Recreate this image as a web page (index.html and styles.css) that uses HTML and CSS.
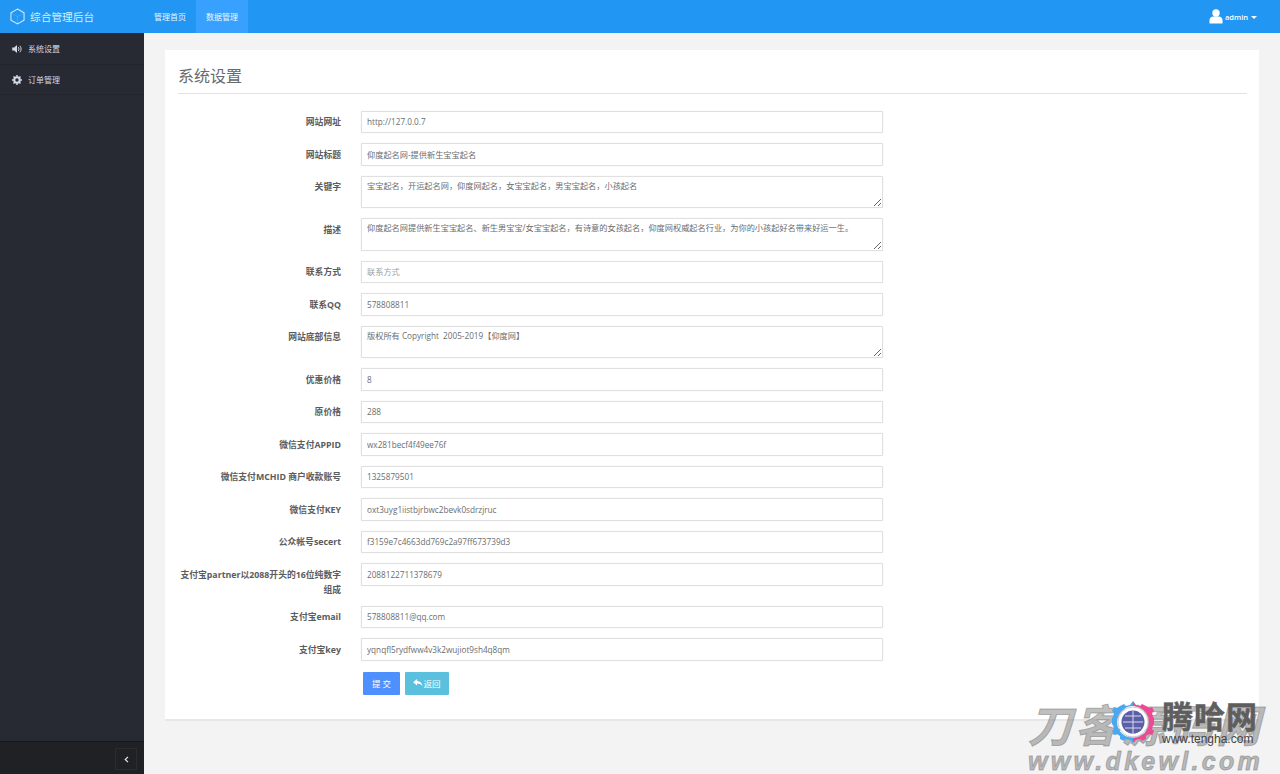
FILE: index.html
```html
<!DOCTYPE html>
<html lang="zh-CN">
  <head>
    <meta charset="UTF-8" />
    <title>系统设置</title>
    <link rel="stylesheet" href="styles.css">
  </head>
  <body>
    <header class="navbar">
      <a class="brand">
        <svg class="brand-icon" viewBox="0 0 16 18" width="15" height="17">
          <path d="M8 1 15 5v8l-7 4-7-4V5z" fill="none" stroke="#d8ecfc" stroke-width="1.100"/>
          <path d="M1 5l7 4 7-4M8 9v8" fill="none" stroke="#d8ecfc" stroke-width="0.600" opacity="0.350"/>
        </svg>
        <span>综合管理后台</span>
      </a>
      <nav class="nav">
        <a>管理首页</a>
        <a class="active">数据管理</a>
      </nav>
      <div class="user">
        <svg viewBox="0 0 14 15" width="14" height="15">
          <circle cx="7" cy="4" r="3.700" fill="#fff"/>
          <path d="M0.500 14.500V11c0-2.400 2-3.600 3.400-3.600h6.200c1.400 0 3.400 1.200 3.400 3.600v3.500z" fill="#fff"/>
        </svg>
        <span>admin</span>
        <i class="caret"></i>
      </div>
    </header>

    <div class="main">
      <aside class="sidebar">
        <ul class="menu">
          <li>
            <svg viewBox="0 0 12 10" width="10" height="8">
              <path d="M0 3h2.500L6 0v10L2.500 7H0z" fill="#d5d9e6"/>
              <path d="M7.500 2.500c1.300 1.300 1.300 3.700 0 5M9.500 1c2.200 2.200 2.200 5.800 0 8" fill="none" stroke="#d5d9e6" stroke-width="1.200"/>
            </svg>
            系统设置
          </li>
          <li>
            <svg viewBox="0 0 12 12" width="10" height="10">
              <circle cx="6" cy="6" r="3.300" fill="none" stroke="#d5d9e6" stroke-width="2.400"/>
              <path d="M6 0v12M0 6h12M1.800 1.800l8.400 8.400M10.200 1.800l-8.400 8.400" stroke="#d5d9e6" stroke-width="1.700" stroke-dasharray="2.200 7.600"/>
            </svg>
            订单管理
          </li>
        </ul>
        <div class="sidebar-foot">
          <button class="collapse" type="button">
            <svg viewBox="0 0 6 8" width="5" height="7">
              <path d="M4.800 0.800 1.500 4l3.300 3.200" fill="none" stroke="#dbe6ee" stroke-width="1.500"/>
            </svg>
          </button>
        </div>
      </aside>

      <main class="content">
        <section class="card">
          <h2 class="card-title">系统设置</h2>
          <form class="form">
            <div class="row"><label>网站网址</label><input type="text" value="http://127.0.0.7" /></div>
            <div class="row"><label>网站标题</label><input type="text" value="仰度起名网-提供新生宝宝起名" /></div>
            <div class="row"><label>关键字</label><textarea>宝宝起名，开运起名网，仰度网起名，女宝宝起名，男宝宝起名，小孩起名</textarea></div>
            <div class="row"><label>描述</label><textarea>仰度起名网提供新生宝宝起名、新生男宝宝/女宝宝起名，有诗意的女孩起名，仰度网权威起名行业，为你的小孩起好名带来好运一生。</textarea></div>
            <div class="row"><label>联系方式</label><input type="text" placeholder="联系方式" /></div>
            <div class="row"><label>联系QQ</label><input type="text" value="578808811" /></div>
            <div class="row"><label>网站底部信息</label><textarea>版权所有 Copyright  2005-2019【仰度网】</textarea></div>
            <div class="row"><label>优惠价格</label><input type="text" value="8" /></div>
            <div class="row"><label>原价格</label><input type="text" value="288" /></div>
            <div class="row"><label>微信支付APPID</label><input type="text" value="wx281becf4f49ee76f" /></div>
            <div class="row"><label>微信支付MCHID 商户收款账号</label><input type="text" value="1325879501" /></div>
            <div class="row"><label>微信支付KEY</label><input type="text" value="oxt3uyg1iistbjrbwc2bevk0sdrzjruc" /></div>
            <div class="row"><label>公众帐号secert</label><input type="text" value="f3159e7c4663dd769c2a97ff673739d3" /></div>
            <div class="row row-tall"><label>支付宝partner以2088开头的16位纯数字组成</label><input type="text" value="2088122711378679" /></div>
            <div class="row"><label>支付宝email</label><input type="text" value="578808811@qq.com" /></div>
            <div class="row"><label>支付宝key</label><input type="text" value="yqnqfl5rydfww4v3k2wujiot9sh4q8qm" /></div>
            <div class="row">
              <span></span>
              <div class="actions">
                <button class="btn btn-primary" type="button">提 交</button>
                <button class="btn btn-info" type="button">
                  <svg viewBox="0 0 11 9" width="10" height="8">
                    <path d="M4.500 0 0 3.700 4.500 7.400V5.200c2.800 0 4.600.7 5.900 3.300C10.400 4.800 8 2.300 4.500 2.200z" fill="#fff"/>
                  </svg>返回
                </button>
              </div>
            </div>
          </form>
        </section>
      </main>
    </div>

    <div class="watermark">
      <div class="wm-back">
        <div class="wm-big">刀客源码网</div>
        <div class="wm-url">www.dkewl.com</div>
      </div>
      <svg class="wm-gear" viewBox="0 0 42 42" width="42" height="42">
        <path d="M21 0v5a16 16 0 0 0 0 32v5l-3-3-4-1-2 2-4-2v-3l-3-2-3 1-2-4 2-2-1-4-3-2v-4l3-2 1-4-2-2 2-4 3 1 3-2V5l4-2 2 2 4-1z" fill="#4aa8ee"/>
        <path d="M21 0v5a16 16 0 0 1 0 32v5l3-3 4-1 2 2 4-2v-3l3-2 3 1 2-4-2-2 1-4 3-2v-4l-3-2-1-4 2-2-2-4-3 1-3-2V5l-4-2-2 2-4-1z" fill="#ec4a92"/>
        <circle cx="21" cy="21" r="15" fill="#fff" stroke="#ccd" stroke-width="1"/>
        <circle cx="21" cy="21" r="11.500" fill="#5a5fa8"/>
        <path d="M21 10v22M11 21h20M13 15h16M13 27h16" stroke="#d9dbee" stroke-width="1"/>
      </svg>
      <div class="wm-front">
        <div class="wm-name">腾哈网</div>
        <div class="wm-site">www.tengha.com</div>
      </div>
    </div>
  </body>
</html>
```

FILE: styles.css
```css
* {
  box-sizing: border-box;
}
html,
body {
  height: 100%;
}
body {
  margin: 0;
  display: flex;
  flex-direction: column;
  overflow: hidden;
  font-family: "Open Sans", "Noto Sans CJK SC", sans-serif;
  color: #676a6c;
  background-color: #f3f3f4;
}
.navbar {
  flex: none;
  height: 33px;
  display: flex;
  align-items: stretch;
  background-color: #2196f3;
  color: #fff;
}
.brand {
  width: 144px;
  display: flex;
  align-items: center;
  gap: 5px;
  padding-left: 10px;
  font-size: 10.700px;
  color: #dcedfb;
}
.nav {
  display: flex;
}
.nav a {
  width: 52px;
  display: flex;
  align-items: center;
  justify-content: center;
  font-size: 8px;
  color: #e8f4fe;
}
.nav a.active {
  background-color: #38a1ff;
}
.user {
  margin-left: auto;
  display: flex;
  align-items: center;
  gap: 2px;
  padding-right: 23px;
  font-size: 7.500px;
  font-weight: 600;
}
.caret {
  width: 0;
  height: 0;
  margin-left: 1px;
  margin-top: 2px;
  border-left: 3px solid transparent;
  border-right: 3px solid transparent;
  border-top: 3px solid #fff;
}
.main {
  flex: 1;
  min-height: 0;
  display: flex;
}
.sidebar {
  flex: none;
  width: 144px;
  display: flex;
  flex-direction: column;
  background-color: #272a33;
}
.menu {
  flex: 1;
  margin: 0;
  padding: 0;
  list-style: none;
}
.menu li {
  height: 32px;
  display: flex;
  align-items: center;
  gap: 6px;
  padding-left: 12px;
  border-bottom: 1px solid #22252c;
  font-size: 8px;
  color: #d5d9e6;
}
.menu li:last-child {
  height: 30px;
}
.sidebar-foot {
  flex: none;
  height: 33px;
  display: flex;
  justify-content: flex-end;
  padding: 6px 7px 0 0;
  border-top: 1px solid #17191d;
  background-color: #1f2125;
}
.collapse {
  width: 22px;
  height: 22px;
  padding: 0;
  display: flex;
  align-items: center;
  justify-content: center;
  border: 1px solid #2a2c31;
  background-color: #1f2125;
}
.content {
  flex: 1;
  min-width: 0;
  padding: 17px 21px 0;
}
.card {
  height: 671px;
  padding: 0 12px 0 13px;
  background-color: #fff;
  border-bottom: 2px solid #e7e7e7;
}
.card-title {
  margin: 0 0 16.500px;
  height: 44px;
  padding-top: 16px;
  border-bottom: 1px solid #e2e2e2;
  font-size: 16px;
  line-height: 21px;
  font-weight: 400;
  color: #676a6c;
}
.row {
  display: grid;
  grid-template-columns: 163px 522px;
  column-gap: 20px;
  align-items: start;
  margin-bottom: 10px;
}
.row label {
  padding-top: 4.500px;
  text-align: right;
  font-size: 8.800px;
  line-height: 15px;
  font-weight: 700;
  color: #5a5c5e;
}
.row input,
.row textarea {
  display: block;
  width: 100%;
  height: 22.500px;
  margin: 0;
  padding: 0 5px;
  border: 1px solid #e0e0e0;
  border-radius: 1px;
  box-shadow: 0 0 1px #d8d8d8;
  outline: none;
  background-color: #fff;
  font-family: inherit;
  font-size: 8.200px;
  color: #6a6d6f;
}
.row textarea {
  height: 32.500px;
  padding: 3px 5px;
  line-height: 11px;
}
.row input::placeholder {
  color: #a0a2a4;
}
.row-tall {
  height: 32.500px;
}
.actions {
  display: flex;
  gap: 5px;
  padding: 1px 2px;
}
.btn {
  height: 23px;
  padding: 0;
  display: flex;
  align-items: center;
  justify-content: center;
  border: 0;
  border-radius: 1px;
  font-family: inherit;
  font-size: 8.500px;
  color: #fff;
}
.btn-primary {
  width: 37px;
  background-color: #4d90fe;
}
.btn-info {
  width: 44px;
  background-color: #5bc0de;
}
/* watermark pasted over the page */
.watermark {
  position: absolute;
  left: 1028px;
  top: 700px;
  width: 252px;
  height: 74px;
  pointer-events: none;
}
.wm-back {
  position: absolute;
  left: 0;
  top: 0;
  font-style: italic;
  font-weight: 700;
  color: rgba(110, 110, 110, 0.45);
  -webkit-text-stroke: 1px rgba(110, 110, 110, 0.45);
}
.wm-big {
  font-size: 44px;
  line-height: 50px;
  letter-spacing: 3px;
  white-space: nowrap;
}
.wm-url {
  font-family: "Liberation Sans", sans-serif;
  font-size: 25px;
  line-height: 22px;
  letter-spacing: 3.300px;
  white-space: nowrap;
}
.wm-gear {
  position: absolute;
  left: 84px;
  top: 1px;
}
.wm-front {
  position: absolute;
  left: 134px;
  top: 0;
  width: 118px;
}
.wm-name {
  font-size: 31px;
  line-height: 33px;
  font-weight: 700;
  letter-spacing: 1px;
  white-space: nowrap;
  color: #5e5e5e;
  -webkit-text-stroke: 0.500px #5e5e5e;
}
.wm-site {
  font-family: "Liberation Sans", sans-serif;
  font-size: 12px;
  line-height: 12px;
  white-space: nowrap;
  color: #444;
}
```
